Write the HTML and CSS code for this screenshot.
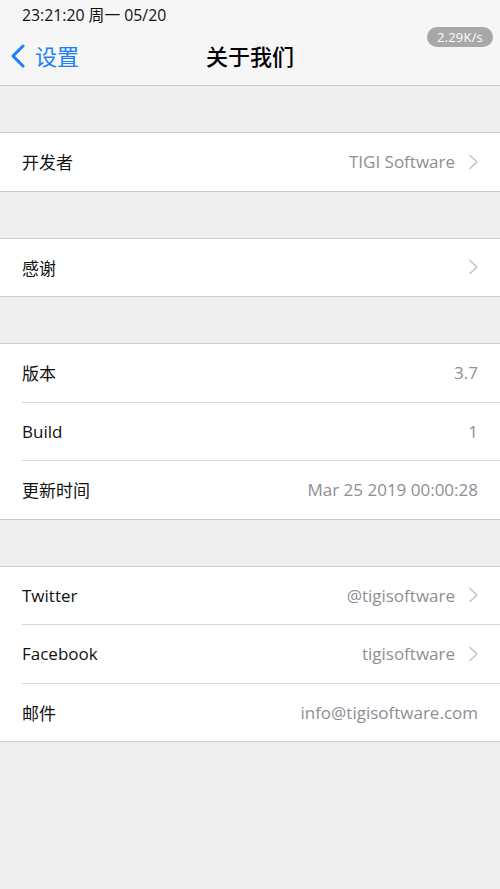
FILE: index.html
```html
<!DOCTYPE html>
<html lang="zh">
<head>
<meta charset="utf-8">
<title>关于我们</title>
<link rel="stylesheet" href="styles.css">
</head>
<body>
<header class="header">
  <div class="status">23:21:20 周一 05/20</div>
  <div class="nav">
    <div class="back">
      <svg class="back-icon" width="16" height="24" viewBox="0 0 16 24"><path d="M13 2 L3 12 L13 22" fill="none" stroke="#1b7ff5" stroke-width="3" stroke-linecap="round" stroke-linejoin="round"/></svg>
      <span class="back-text">设置</span>
    </div>
    <div class="title">关于我们</div>
  </div>
  <div class="speed">2.29K/s</div>
</header>

<main class="content">
  <section class="group">
    <div class="row"><span class="label">开发者</span><span class="value">TIGI Software</span><svg class="chev" width="12" height="16" viewBox="0 0 12 16"><path d="M2 1.5 L9 8 L2 14.5" fill="none" stroke="#c4c4c7" stroke-width="1.6" stroke-linecap="round" stroke-linejoin="round"/></svg></div>
  </section>
  <section class="group">
    <div class="row"><span class="label">感谢</span><span class="value"></span><svg class="chev" width="12" height="16" viewBox="0 0 12 16"><path d="M2 1.5 L9 8 L2 14.5" fill="none" stroke="#c4c4c7" stroke-width="1.6" stroke-linecap="round" stroke-linejoin="round"/></svg></div>
  </section>
  <section class="group">
    <div class="row"><span class="label">版本</span><span class="value">3.7</span></div>
    <div class="row"><span class="label">Build</span><span class="value">1</span></div>
    <div class="row"><span class="label">更新时间</span><span class="value">Mar 25 2019 00:00:28</span></div>
  </section>
  <section class="group">
    <div class="row"><span class="label">Twitter</span><span class="value">@tigisoftware</span><svg class="chev" width="12" height="16" viewBox="0 0 12 16"><path d="M2 1.5 L9 8 L2 14.5" fill="none" stroke="#c4c4c7" stroke-width="1.6" stroke-linecap="round" stroke-linejoin="round"/></svg></div>
    <div class="row"><span class="label">Facebook</span><span class="value">tigisoftware</span><svg class="chev" width="12" height="16" viewBox="0 0 12 16"><path d="M2 1.5 L9 8 L2 14.5" fill="none" stroke="#c4c4c7" stroke-width="1.6" stroke-linecap="round" stroke-linejoin="round"/></svg></div>
    <div class="row"><span class="label">邮件</span><span class="value">info@tigisoftware.com</span></div>
  </section>
</main>
</body>
</html>
```

FILE: styles.css
```css
* { box-sizing: border-box; }
html, body { margin: 0; padding: 0; }
body {
  width: 500px;
  min-height: 889px;
  background: #efefef;
  font-family: "Open Sans", "Noto Sans CJK SC", sans-serif;
  color: #111;
}
.header {
  position: relative;
  background: #f6f6f6;
  border-bottom: 1px solid #cacaca;
  height: 86px;
}
.status {
  height: 32px;
  padding: 5px 0 0 22px;
  font-size: 15.8px;
  line-height: 20px;
  color: #111;
}
.nav {
  position: relative;
  height: 47px;
  display: flex;
  align-items: center;
  justify-content: center;
}
.back {
  position: absolute;
  left: 10px;
  top: 10px;
  display: flex;
  align-items: center;
  gap: 9px;
  color: #1b7ff5;
}
.back-icon { display: block; }
.back-text { font-size: 22px; line-height: 28px; }
.title {
  font-size: 22px;
  font-weight: 500;
  line-height: 28px;
  color: #000;
}
.speed {
  position: absolute;
  right: 7px;
  top: 27px;
  height: 20px;
  padding: 0 10px;
  border-radius: 10px;
  background: #a8a8a8;
  color: #fff;
  font-size: 13px;
  line-height: 20px;
  letter-spacing: 0.2px;
}
.content {
  padding-top: 46px;
}
.group {
  background: #fff;
  border-top: 1px solid #cdcdcd;
  border-bottom: 1px solid #cdcdcd;
  margin-bottom: 46px;
  padding-left: 22px;
}
.row {
  height: 58.5px;
  display: flex;
  align-items: center;
  padding-right: 22px;
  border-bottom: 1px solid #d6d6d6;
}
.row:last-child { border-bottom: none; height: 57.5px; }
.label {
  font-size: 17px;
  color: #111;
  flex: none;
}
.value {
  margin-left: auto;
  font-size: 17px;
  color: #8e8e93;
}
.chev {
  display: block;
  margin-left: 13px;
  margin-right: -2px;
  flex: none;
}
```
